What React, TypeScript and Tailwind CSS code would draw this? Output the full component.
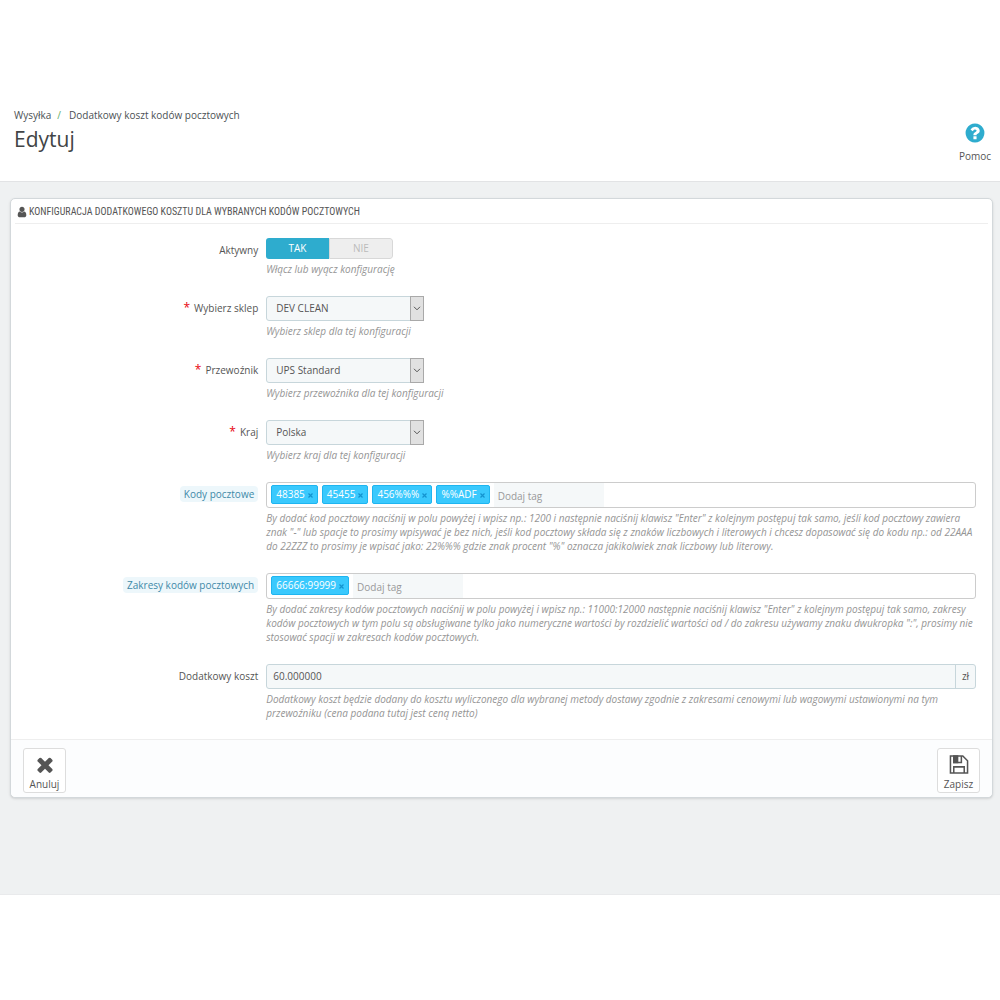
import { ReactNode, useState } from "react";

const USER_ICON =
  "M1536 1399q0 109-62.5 187t-150.5 78h-854q-88 0-150.5-78t-62.5-187q0-85 8.5-160.5t31.5-152 58.5-131 94-89 134.5-34.5q131 128 313 128t313-128q76 0 134.5 34.5t94 89 58.5 131 31.5 152 8.5 160.5zm-256-887q0 159-112.5 271.5t-271.5 112.5-271.5-112.5-112.5-271.5 112.5-271.5 271.5-112.5 271.5 112.5 112.5 271.5z";
const HELP_ICON =
  "M1024 1376v-192q0-14-9-23t-23-9h-192q-14 0-23 9t-9 23v192q0 14 9 23t23 9h192q14 0 23-9t9-23zm256-672q0-88-55.5-163t-138.5-116-170-41q-243 0-371 213-15 24 8 42l132 100q7 6 19 6 16 0 25-12 53-68 86-92 34-24 86-24 48 0 85.5 26t37.5 59q0 38-20 61t-68 45q-63 28-115.5 86.5t-52.5 125.5v36q0 14 9 23t23 9h192q14 0 23-9t9-23q0-19 21.5-49.5t54.5-49.5q32-18 49-28.5t46-35 44.5-48 28-60.5 12.5-81zm384 192q0 209-103 385.5t-279.5 279.5-385.5 103-385.5-103-279.5-279.5-103-385.5 103-385.5 279.5-279.5 385.5-103 385.5 103 279.5 279.5 103 385.5z";
const TIMES_ICON =
  "M1490 1322q0 40-28 68l-136 136q-28 28-68 28t-68-28l-294-294-294 294q-28 28-68 28t-68-28l-136-136q-28-28-28-68t28-68l294-294-294-294q-28-28-28-68t28-68l136-136q28-28 68-28t68 28l294 294 294-294q28-28 68-28t68 28l136 136q28 28 28 68t-28 68l-294 294 294 294q28 28 28 68z";

function Icon({ path, className }: { path: string; className: string }) {
  return (
    <svg viewBox="0 0 1792 1792" fill="currentColor" className={className} aria-hidden="true">
      <path d={path} />
    </svg>
  );
}

interface RowProps {
  label: string;
  htmlFor?: string;
  required?: boolean;
  hint?: boolean;
  help: string;
  children: ReactNode;
}

function FormRow({ label, htmlFor, required, hint, help, children }: RowProps) {
  return (
    <div className="flex">
      <div className="w-1/4 shrink-0 px-1 pt-1 text-right text-[10px] leading-4 text-[#555]">
        {required && <span className="mr-1 text-xs leading-4 text-red-600">*</span>}
        <label
          htmlFor={htmlFor}
          className={hint ? "inline-block rounded-sm bg-[#edf7fb] px-1 text-[#3f89a8]" : ""}
        >
          {label}
        </label>
      </div>
      <div className="min-w-0 flex-1 px-1">
        {children}
        <p className="mt-[3px] text-[10px] italic leading-[14px] text-[#959595]">{help}</p>
      </div>
    </div>
  );
}

function SelectBox({ id, options }: { id: string; options: string[] }) {
  return (
    <div className="relative h-[25px] w-[158px]">
      <select
        id={id}
        className="block h-full w-full appearance-none rounded-[3px] border border-[#c7d6db] bg-[#f5f8f9] pl-[9px] text-[10px] text-[#555]"
      >
        {options.map((o) => (
          <option key={o}>{o}</option>
        ))}
      </select>
      <span className="pointer-events-none absolute inset-y-0 right-0 flex w-[14px] items-center justify-center border border-[#a9a9a9] bg-[#e1e1e1]">
        <svg viewBox="0 0 8 5" className="h-[5px] w-2" fill="none" stroke="#555" aria-hidden="true">
          <path d="M1 .8L4 3.8L7 .8" />
        </svg>
      </span>
    </div>
  );
}

function TagInput({ id, initial }: { id: string; initial: string[] }) {
  const [tags, setTags] = useState(initial);
  const [value, setValue] = useState("");

  const addTag = () => {
    if (value.trim()) setTags([...tags, value.trim()]);
    setValue("");
  };

  return (
    <div className="flex h-[26px] rounded-[3px] border border-[#ccc] bg-white pl-1">
      {tags.map((tag) => (
        <span
          key={tag}
          className="mr-1 mt-[2px] flex h-[19px] items-center gap-[3px] rounded-[2px] border border-[#1fb5f0] bg-[#3ac9fd] px-1 text-[10px] text-white"
        >
          {tag}
          <button
            type="button"
            aria-label={`Usuń ${tag}`}
            onClick={() => setTags(tags.filter((t) => t !== tag))}
            className="pt-[2px] text-[#1493cf]"
          >
            <svg viewBox="0 0 5 5" className="h-[5px] w-[5px]" stroke="currentColor" strokeWidth="1.2">
              <path d="M.5 .5L4.5 4.5M4.5 .5L.5 4.5" />
            </svg>
          </button>
        </span>
      ))}
      <input
        id={id}
        type="text"
        placeholder="Dodaj tag"
        value={value}
        onChange={(e) => setValue(e.target.value)}
        onKeyDown={(e) => e.key === "Enter" && addTag()}
        className="w-[110px] bg-[#f5f8f9] px-1 pt-[2px] text-[10px] text-[#555] placeholder:text-[#999]"
      />
    </div>
  );
}

export default function App() {
  const [active, setActive] = useState(true);

  return (
    <div className="min-h-screen bg-white font-['Open_Sans',sans-serif] text-[#555]">
      {/* Header */}
      <header className="flex justify-between border-b border-[#e2e3e5] pt-[107px] pb-[17px] pl-[14px] pr-[9px]">
        <div>
          <nav className="flex text-[10px] leading-4 text-[#4b5054]">
            <a href="#shipping">Wysyłka</a>
            <span className="pl-[6px] pr-2 text-[#5fae67]">/</span>
            <a href="#postcodes">Dodatkowy koszt kodów pocztowych</a>
          </nav>
          <h1 className="text-[21px] leading-8 text-[#414446]">Edytuj</h1>
        </div>
        <a href="#help" className="flex flex-col items-center pt-[15px] text-[10px] leading-4">
          <Icon path={HELP_ICON} className="mb-1 size-[22px] text-[#2eacce]" />
          Pomoc
        </a>
      </header>

      <main className="border-b border-[#e9eaec] bg-[#eff1f2] pt-4 pb-24 pl-[10px] pr-[7px]">
        <form
          onSubmit={(e) => e.preventDefault()}
          className="rounded-[5px] border border-[#d3d8db] bg-white shadow-sm"
        >
          <h2 className="mx-1 flex h-[25px] items-center gap-[1px] border-b border-[#eee] pt-px pl-[1px] font-['Ubuntu_Condensed','Roboto_Condensed','Open_Sans',sans-serif] text-[10px] uppercase text-[#555]">
            <Icon path={USER_ICON} className="size-3" />
            Konfiguracja dodatkowego kosztu dla wybranych kodów pocztowych
          </h2>

          <div className="flex flex-col gap-5 px-3 pt-[14px] pb-[19px]">
            <FormRow label="Aktywny" help="Włącz lub wyącz konfigurację">
              <div className="flex h-[21px] w-[127px] overflow-hidden rounded-[3px] text-[10px]">
                <button
                  type="button"
                  aria-pressed={active}
                  onClick={() => setActive(true)}
                  className={active ? "flex-1 bg-[#2eacce] text-white" : "flex-1 border border-[#d8d8d8] bg-[#eee] text-[#bbb]"}
                >
                  TAK
                </button>
                <button
                  type="button"
                  aria-pressed={!active}
                  onClick={() => setActive(false)}
                  className={active ? "flex-1 rounded-r-[3px] border border-[#d8d8d8] bg-[#eee] text-[#bbb]" : "flex-1 bg-[#e08f95] text-white"}
                >
                  NIE
                </button>
              </div>
            </FormRow>

            <FormRow label="Wybierz sklep" htmlFor="shop" required help="Wybierz sklep dla tej konfiguracji">
              <SelectBox id="shop" options={["DEV CLEAN"]} />
            </FormRow>

            <FormRow label="Przewoźnik" htmlFor="carrier" required help="Wybierz przewoźnika dla tej konfiguracji">
              <SelectBox id="carrier" options={["UPS Standard"]} />
            </FormRow>

            <FormRow label="Kraj" htmlFor="country" required help="Wybierz kraj dla tej konfiguracji">
              <SelectBox id="country" options={["Polska"]} />
            </FormRow>

            <FormRow
              label="Kody pocztowe"
              htmlFor="codes"
              hint
              help={`By dodać kod pocztowy naciśnij w polu powyżej i wpisz np.: 1200 i następnie naciśnij klawisz "Enter" z kolejnym postępuj tak samo, jeśli kod pocztowy zawiera znak "-" lub spacje to prosimy wpisywać je bez nich, jeśli kod pocztowy składa się z znaków liczbowych i literowych i chcesz dopasować się do kodu np.: od 22AAA do 22ZZZ to prosimy je wpisać jako: 22%%% gdzie znak procent "%" oznacza jakikolwiek znak liczbowy lub literowy.`}
            >
              <TagInput id="codes" initial={["48385", "45455", "456%%%", "%%ADF"]} />
            </FormRow>

            <FormRow
              label="Zakresy kodów pocztowych"
              htmlFor="ranges"
              hint
              help={`By dodać zakresy kodów pocztowych naciśnij w polu powyżej i wpisz np.: 11000:12000 następnie naciśnij klawisz "Enter" z kolejnym postępuj tak samo, zakresy kodów pocztowych w tym polu są obsługiwane tylko jako numeryczne wartości by rozdzielić wartości od / do zakresu używamy znaku dwukropka ":", prosimy nie stosować spacji w zakresach kodów pocztowych.`}
            >
              <TagInput id="ranges" initial={["66666:99999"]} />
            </FormRow>

            <FormRow
              label="Dodatkowy koszt"
              htmlFor="cost"
              help="Dodatkowy koszt będzie dodany do kosztu wyliczonego dla wybranej metody dostawy zgodnie z zakresami cenowymi lub wagowymi ustawionymi na tym przewoźniku (cena podana tutaj jest ceną netto)"
            >
              <div className="flex h-[25px] rounded-[3px] border border-[#c7d6db] bg-[#f5f8f9] text-[10px] text-[#555]">
                <input id="cost" type="text" defaultValue="60.000000" className="min-w-0 flex-1 px-[6px]" />
                <span className="flex w-5 items-center justify-center border-l border-[#c7d6db]">zł</span>
              </div>
            </FormRow>
          </div>

          {/* Footer */}
          <div className="flex justify-between rounded-b-[5px] border-t border-[#eee] bg-[#fcfdfe] px-3 pt-2 pb-1">
            <button
              type="button"
              className="flex h-[45px] w-[43px] flex-col items-center rounded-[3px] border border-[#ddd] bg-white pt-1 text-[10px] leading-4"
            >
              <Icon path={TIMES_ICON} className="size-6" />
              Anuluj
            </button>
            <button
              type="submit"
              className="flex h-[45px] w-[43px] flex-col items-center rounded-[3px] border border-[#ddd] bg-white pt-1 text-[10px] leading-4"
            >
              <svg viewBox="0 0 20 20" className="my-[2px] size-5" fill="none" stroke="currentColor" strokeWidth="1.6" aria-hidden="true">
                <path d="M1 1H14L19 6V19H1Z" />
                <path d="M4.5 19V12.5H15.5V19" />
                <path d="M4.5 1V8H12.5V1" />
                <path d="M4.5 1H8.5V8H4.5Z" fill="currentColor" />
              </svg>
              Zapisz
            </button>
          </div>
        </form>
      </main>
    </div>
  );
}
